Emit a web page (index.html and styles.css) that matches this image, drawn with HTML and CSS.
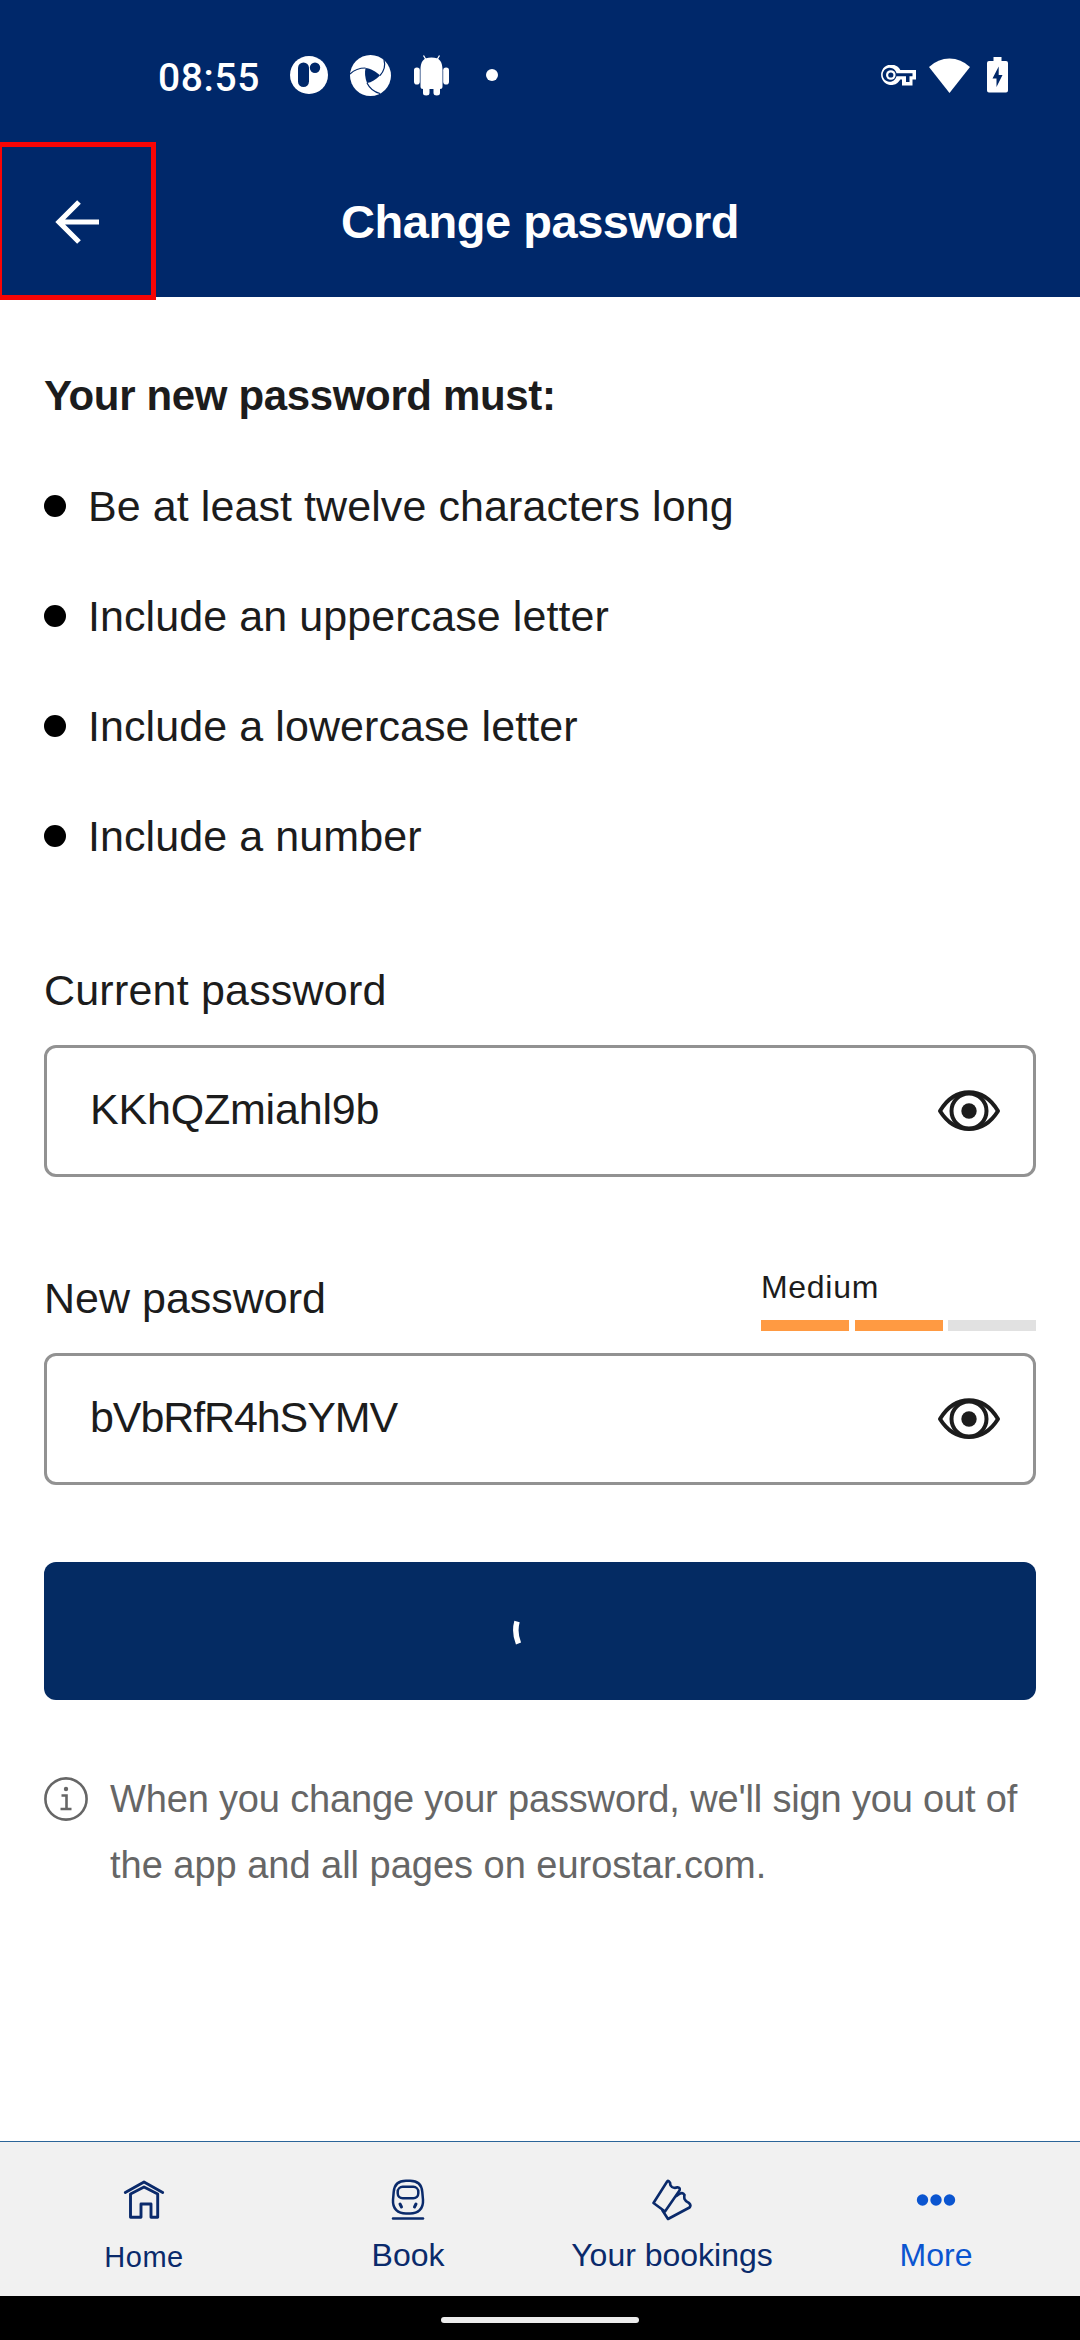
FILE: index.html
```html
<!DOCTYPE html>
<html lang="en">
<head>
<meta charset="utf-8">
<title>Change password</title>
<link rel="stylesheet" href="styles.css">
</head>
<body>
<div class="screen">
  <header class="header">
    <div class="status">
      <span class="clock">08:55</span>
      <svg class="ic-r" width="38" height="38" viewBox="0 0 38 38"><circle cx="19" cy="19" r="19" fill="#fff"/><rect x="8" y="6.500" width="11" height="24.500" rx="5.500" fill="#00286a"/><circle cx="25" cy="11.700" r="5.200" fill="#00286a"/></svg>
      <svg class="ic-swirl" width="41" height="41" viewBox="0 0 41 41"><circle cx="20.500" cy="20.500" r="20.500" fill="#fff"/><path d="M15.500 13C20.500 13.500 26 16.500 30 20.500C26 24.500 21.500 27.500 17 28C15 23.500 14.500 17 15.500 13Z" fill="#00286a"/><g fill="none" stroke="#00286a" stroke-width="1.200"><path d="M0 19C4 15 9 13 15.500 13"/><path d="M34 5C35.500 10 34 16 30 20.500"/><path d="M17 28C19.500 33 24 37 30 38.500"/></g></svg>
      <svg class="ic-droid" width="35" height="41" viewBox="0 0 35 41" fill="#fff"><path d="M6.500 15C6.500 7 9 2.500 17.500 2.500S28.500 7 28.500 15V31.500Q28.500 34 26 34V38Q26 40.500 22.800 40.500T19.500 38V34H15.500V38Q15.500 40.500 12.200 40.500T9 38V34Q6.500 34 6.500 31.500Z"/><rect x="0" y="12.500" width="5.800" height="17" rx="2.800"/><rect x="29.200" y="12.500" width="5.800" height="17" rx="2.800"/><path d="M9.500 .5L12.500 5.500M25.500 .5L22.500 5.500" stroke="#fff" stroke-width="1.300"/></svg>
      <i class="more-dot"></i>
      <svg class="ic-key" width="35" height="21" viewBox="0 0 35 21"><path d="M19.300 5H35V14.500H31.500V20.500H21V14.500H19.300A10.200 10.200 0 1 1 19.300 5Z" fill="#fff"/><path d="M15.500 8.300H31.500V11.300H28.500V17H25V11.300H15.500A7 7 0 1 1 15.500 8.300Z" fill="#00286a"/><circle cx="9.800" cy="10" r="4.800" fill="#fff"/><circle cx="9.800" cy="10" r="2.600" fill="#00286a"/></svg>
      <svg class="ic-wifi" width="41" height="35" viewBox="0 0 41 35"><path d="M0 9Q9 .5 20.500 .5T41 9L20.500 35Z" fill="#fff"/></svg>
      <svg class="ic-batt" width="21" height="36" viewBox="0 0 21 36"><path d="M6.500 0H14.500V4H19Q21 4 21 6V33.500Q21 35.500 19 35.500H2Q0 35.500 0 33.500V6Q0 4 2 4H6.500Z" fill="#fff"/><path d="M11.700 9.500L5.500 21.500H9.500V30L15.500 18H11.700Z" fill="#00286a"/></svg>
    </div>
    <div class="appbar">
      <button class="back" aria-label="Back"><svg width="44" height="44" viewBox="0 0 44 44" fill="none" stroke="#fff" stroke-width="5.200"><path d="M44 22H4M24 2L4 22L24 42"/></svg></button>
      <h1 class="title">Change password</h1>
    </div>
  </header>
  <main class="content">
    <h2 class="rules-title">Your new password must:</h2>
    <ul class="rules">
      <li>Be at least twelve characters long</li>
      <li>Include an uppercase letter</li>
      <li>Include a lowercase letter</li>
      <li>Include a number</li>
    </ul>
    <section class="field">
      <div class="label label-current">Current password</div>
      <div class="input"><span class="value-current">KKhQZmiahl9b</span><svg class="eye" width="64" height="42" viewBox="0 0 64 42" fill="none" stroke="#1c1c1c" stroke-width="4"><path d="M3 21C18 -4 46 -4 61 21C46 45 18 45 3 21Z" stroke-linejoin="round"/><circle cx="32" cy="21" r="17.500"/><circle cx="32" cy="21" r="7.700" fill="#1c1c1c" stroke="none"/></svg></div>
    </section>
    <section class="field field-new">
      <div class="label-row">
        <div class="label">New password</div>
        <div class="strength">
          <span class="strength-text">Medium</span>
          <div class="bars"><i class="on"></i><i class="on"></i><i></i></div>
        </div>
      </div>
      <div class="input"><span class="value-new">bVbRfR4hSYMV</span><svg class="eye" width="64" height="42" viewBox="0 0 64 42" fill="none" stroke="#1c1c1c" stroke-width="4"><path d="M3 21C18 -4 46 -4 61 21C46 45 18 45 3 21Z" stroke-linejoin="round"/><circle cx="32" cy="21" r="17.500"/><circle cx="32" cy="21" r="7.700" fill="#1c1c1c" stroke="none"/></svg></div>
    </section>
    <button class="submit" aria-label="Saving"><svg width="56" height="56" viewBox="0 0 56 56" fill="none" stroke="#fff" stroke-width="5.500"><path d="M5 18.500Q2 29.500 6.500 40.500"/></svg></button>
    <div class="note">
      <svg width="44" height="66" viewBox="0 0 44 66" fill="none" stroke="#666" stroke-width="2.600"><circle cx="22" cy="33" r="20.600"/><path d="M17.500 29.500H22.500V43M16.500 43H27.500"/><circle cx="22" cy="23" r="2.200" fill="#666" stroke="none"/></svg>
      <p>When you change your password, we'll sign you out of<br><span class="second">the app and all pages on eurostar.com.</span></p>
    </div>
  </main>
  <nav class="tabs">
    <a class="tab home"><svg width="42" height="42" viewBox="0 0 42 42" fill="none" stroke="#0a2a6b" stroke-width="2.900" stroke-linejoin="round" stroke-linecap="round"><path d="M2.300 13.500L21 3L39.700 13.500"/><path d="M7.500 15V38.300H18V25H28V38.300H34.700V15L21 8Z"/></svg><span>Home</span></a>
    <a class="tab"><svg width="42" height="42" viewBox="0 0 42 42" fill="none" stroke="#0a2a6b" stroke-width="2.500" stroke-linecap="round"><path d="M21 1.800H23C31 1.800 34.700 5.500 35.300 13L36 21C36.500 30 31 34.500 23 34.500H19C11 34.500 5.500 30 6 21L6.700 13C7.300 5.500 11 1.800 19 1.800Z"/><rect x="10.700" y="7.800" width="20.600" height="11.500" rx="5"/><path d="M13 25L14.500 28M29 25L27.500 28" stroke-width="3"/><path d="M6 39.500H36"/></svg><span>Book</span></a>
    <a class="tab"><svg width="42" height="42" viewBox="0 0 42 42" fill="none" stroke="#0a2a6b" stroke-width="2.600" stroke-linejoin="round" stroke-linecap="round"><path d="M16.300 2.300L2.500 24L14 32.500L28.500 11.500Q29.500 8.500 26.500 8.300Q23.500 9.500 21 8Q18.800 6.500 19.200 4.200Q17.500 1 16.300 2.300Z"/><path d="M11.500 31.500L17 40L38.500 28.500Q40.500 26.500 38 24Q34.500 22.500 33.500 20Q33 17.500 33.500 16Q31.500 12.500 27.500 15.500L25.500 17"/></svg><span>Your bookings</span></a>
    <a class="tab active"><svg width="42" height="42" viewBox="0 0 42 42" fill="#0b55d0"><circle cx="7.500" cy="21" r="5.700"/><circle cx="21" cy="21" r="5.700"/><circle cx="34.500" cy="21" r="5.700"/></svg><span>More</span></a>
  </nav>
  <div class="system-nav"><i></i></div>
</div>
</body>
</html>
```
FILE: styles.css
```css
* { box-sizing: border-box; }
body { margin: 0; background: #fff; }
.screen {
  width: 1080px;
  height: 2340px;
  display: flex;
  flex-direction: column;
  font-family: "Liberation Sans", Arial, sans-serif;
  color: #1c1c1c;
  background: #fff;
  overflow: hidden;
}
svg { display: block; flex: none; }
button { border: 0; padding: 0; }

.header { height: 297px; background: #00286a; flex: none; }
.status {
  height: 150px;
  padding: 0 72px 0 158px;
  display: flex;
  align-items: center;
}
.clock {
  width: 132px;
  padding-top: 6px;
  font: 500 39px/44px Roboto, sans-serif;
  letter-spacing: 0.6px;
  color: #fff;
}
.ic-swirl { margin-left: 22px; }
.ic-droid { margin-left: 23px; }
.more-dot { width: 12px; height: 12px; margin-left: 37px; border-radius: 50%; background: #fff; }
.ic-key { margin-left: auto; }
.ic-wifi { margin-left: 13px; }
.ic-batt { margin-left: 17px; }

.appbar { position: relative; height: 144px; display: flex; align-items: center; justify-content: center; }
.back {
  position: absolute;
  left: -3px;
  top: -8px;
  width: 159px;
  height: 158px;
  padding-top: 2px;
  border: 5px solid #f80505;
  background: none;
  display: flex;
  align-items: center;
  justify-content: center;
}
.title { margin: 0; font-size: 47px; line-height: 60px; font-weight: 700; letter-spacing: -0.45px; color: #fff; }

.content { flex: 1; padding: 66px 44px 0; }
.rules-title { margin: 0; font-size: 42px; line-height: 66px; letter-spacing: -0.35px; }
.rules { list-style: none; margin: 22px 0 0; padding: 0; }
.rules li { height: 110px; display: flex; align-items: center; gap: 22px; font-size: 43px; letter-spacing: 0.08px; }
.rules li::before { content: ""; width: 22px; height: 22px; border-radius: 50%; background: #000; }

.field { margin-top: 69px; }
.field-new { margin-top: 91px; }
.label { font-size: 43px; line-height: 60px; }
.label-current { letter-spacing: 0.2px; }
.input {
  height: 132px;
  margin-top: 25px;
  padding: 0 32px 0 43px;
  border: 3px solid #929292;
  border-radius: 12px;
  display: flex;
  align-items: center;
  justify-content: space-between;
  font-size: 43px;
}
.input span { padding-bottom: 4px; }
.value-current { letter-spacing: -0.2px; }
.value-new { letter-spacing: -1.1px; }
.label-row { height: 63px; display: flex; justify-content: space-between; }
.label-row + .input { margin-top: 22px; }
.strength { width: 275px; display: flex; flex-direction: column; justify-content: space-between; }
.strength-text { padding-top: 1px; font-size: 32px; line-height: 36px; letter-spacing: 0.7px; }
.bars { height: 11px; display: flex; gap: 5.5px; }
.bars i { flex: 1; background: #e1e1e1; }
.bars .on { background: #ff9a42; }

.submit {
  width: 100%;
  height: 138px;
  margin-top: 77px;
  border-radius: 12px;
  background: #042b63;
  display: flex;
  align-items: center;
  justify-content: center;
}
.note { margin-top: 66px; display: flex; gap: 22px; color: #666; }
.note p { margin: 0; font-size: 38px; line-height: 66px; letter-spacing: -0.16px; white-space: nowrap; }
.second { letter-spacing: -0.02px; }

.tabs {
  height: 155px;
  padding: 0 12px;
  border-top: 1px solid #2c6599;
  background: #f1f1f1;
  display: grid;
  grid-template-columns: repeat(4, 1fr);
}
.tab {
  padding-top: 37px;
  display: flex;
  flex-direction: column;
  align-items: center;
  gap: 15px;
  font-size: 32px;
  line-height: 38px;
  color: #0a2a6b;
  white-space: nowrap;
}
.home { font-size: 29px; gap: 17px; letter-spacing: 0.5px; }
.active { color: #0b55d0; }
.system-nav { height: 44px; background: #000; display: flex; align-items: center; justify-content: center; }
.system-nav i { width: 198px; height: 6px; margin-top: 4px; border-radius: 3px; background: #ececec; }
```
